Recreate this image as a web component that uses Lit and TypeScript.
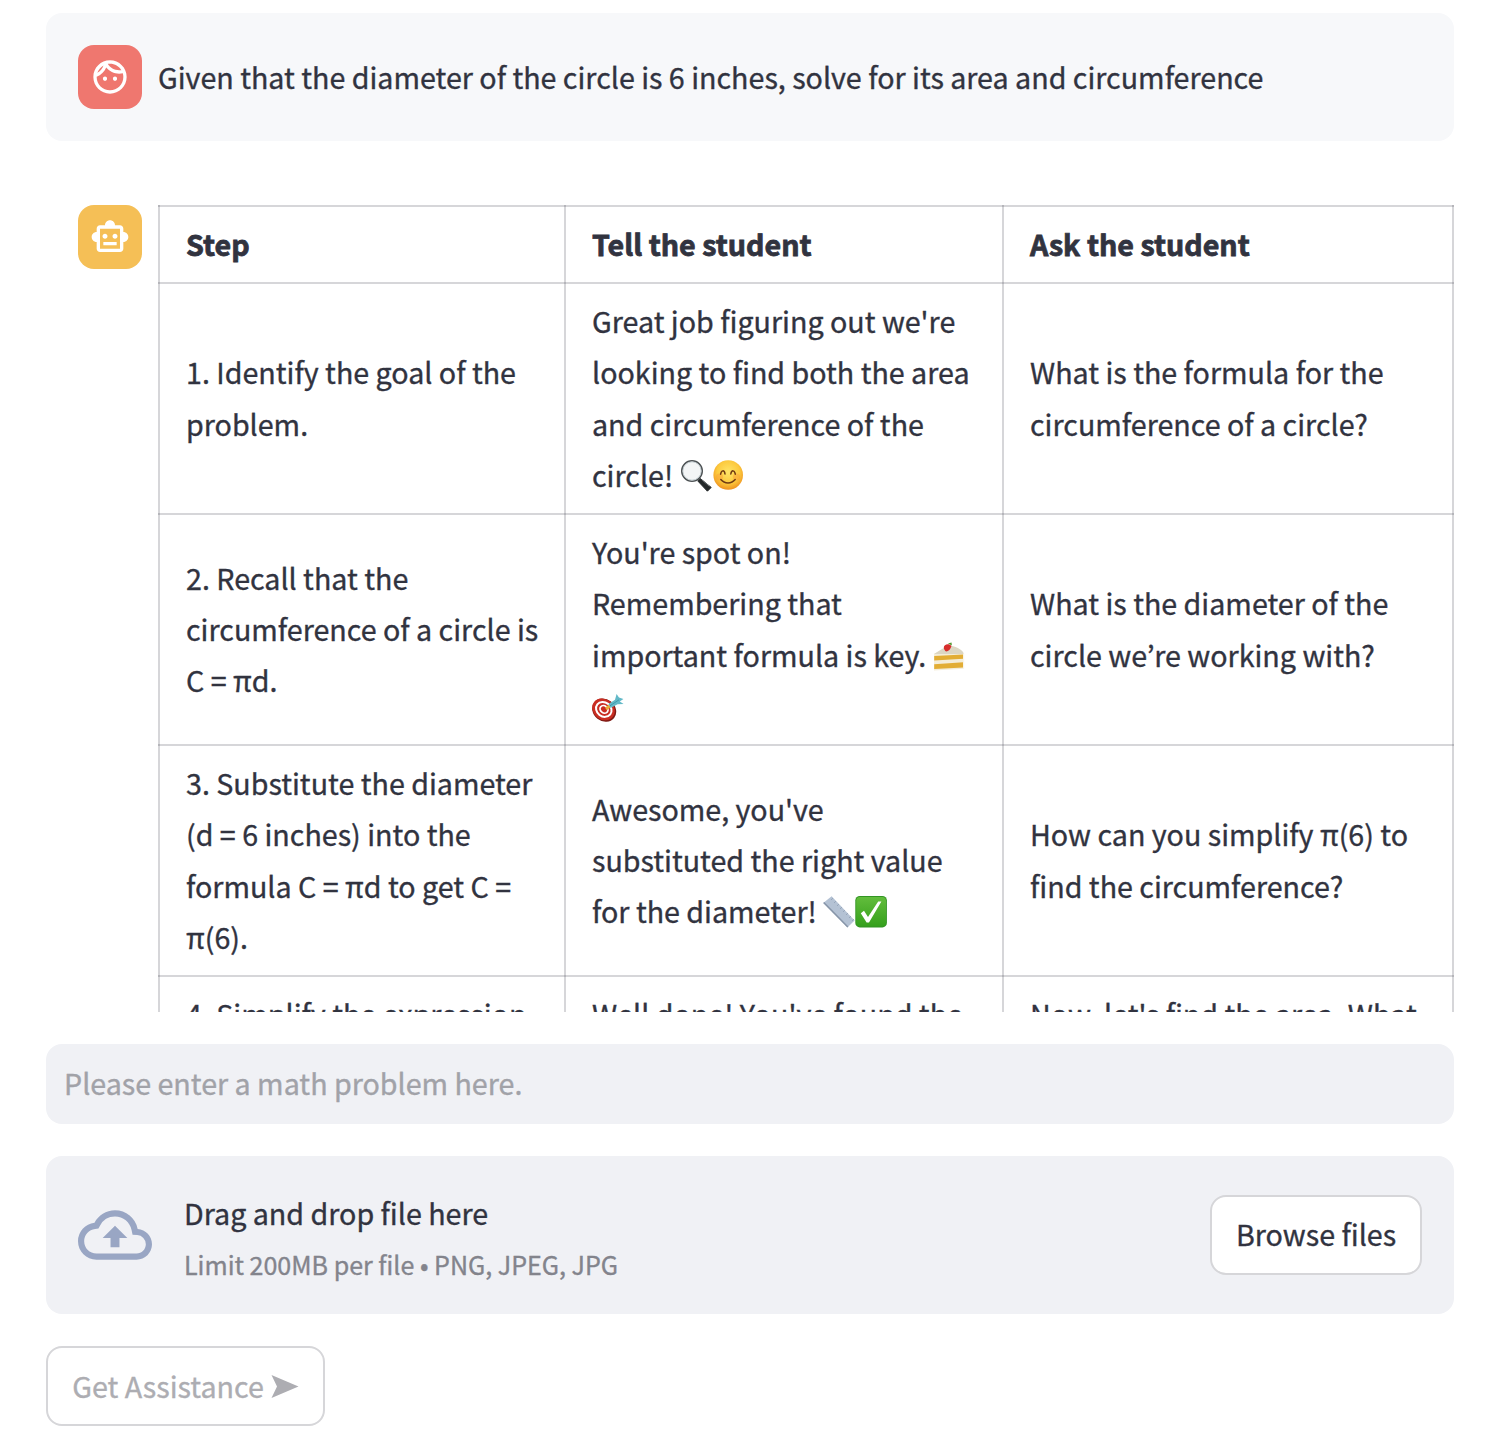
import { LitElement, html, css, svg, TemplateResult } from "lit";
import { customElement } from "lit/decorators.js";

type Line = string | TemplateResult;

const magnifier = html`<svg class="emoji" viewBox="0 0 32 32" role="img" aria-label="magnifying glass">
  <path d="M20 18.5 31.2 27.4 27.4 31.2 17.8 21z" fill="#24282a" stroke="#24282a" stroke-linejoin="round"/>
  <path d="M22 19.8 29.3 26.2" stroke="#6d7275" stroke-width="1"/>
  <circle cx="12" cy="11" r="10.2" fill="#f3f5f6" stroke="#4b5052" stroke-width="1.6"/>
  <circle cx="12" cy="11" r="9.2" fill="none" stroke="#bcc6cb" stroke-width=".9"/>
</svg>`;
const smile = html`<svg class="emoji" viewBox="0 0 32 32" role="img" aria-label="smiling face">
  <defs><radialGradient id="face" cx=".5" cy=".4" r=".62"><stop offset="0" stop-color="#ffe567"/><stop offset=".62" stop-color="#fcc93d"/><stop offset="1" stop-color="#ee8d1c"/></radialGradient></defs>
  <circle cx="16.2" cy="15" r="14.8" fill="url(#face)"/>
  <circle cx="7.5" cy="17" r="3.6" fill="#f99b3a" opacity=".45"/><circle cx="24.5" cy="17" r="3.6" fill="#f99b3a" opacity=".45"/>
  <path d="M8.6 14.2C9.4 9.8 12.4 9.8 13 14M18.8 14C19.5 9.8 22.5 9.8 23.3 14.2M8.8 19.5c3.8 4.5 10.6 4.5 14.4 0" fill="none" stroke="#713b13" stroke-width="1.5" stroke-linecap="round"/>
</svg>`;
const cake = html`<svg class="emoji low" viewBox="0 0 32 32" role="img" aria-label="shortcake">
  <path d="M1 12 15 3.6 31 12v14.8L1 28.6z" fill="#f4edd9"/>
  <path d="M1 12 15 3.6C22 4 29 7 31 12z" fill="#dcd6c3"/>
  <path d="M1.2 14 30.4 12.6v4.2L1.2 18.4zM1.2 22.2 30.4 20.2v5.2L1.2 27z" fill="#e2ad35"/>
  <path d="M30 11.5h1.2v15.2L30 27z" fill="#faf5e8"/>
  <path d="M10.8 5.4c-.2-3.2 5.6-4.8 7.6-1.2-.8 3-3 5-5.2 5.2-1.2-.6-2.2-2-2.4-4z" fill="#d72e2c"/>
  <path d="M15 1.5 18.5.4l.4 3.2z" fill="#51952d"/>
</svg>`;
const target = html`<svg class="emoji low" viewBox="0 0 32 32" role="img" aria-label="bullseye">
  <ellipse cx="12.2" cy="17.2" rx="12.6" ry="11" transform="rotate(38 12.2 17.2)" fill="#7f1a14"/>
  <ellipse cx="11.5" cy="16.4" rx="12" ry="10.2" transform="rotate(38 11.5 16.4)" fill="#c92d22"/>
  <g fill="none"><ellipse cx="11.8" cy="16.4" rx="8.2" ry="7" transform="rotate(38 11.8 16.4)" stroke="#fff" stroke-width="2"/><ellipse cx="12" cy="16.4" rx="4.2" ry="3.5" transform="rotate(38 12 16.4)" stroke="#fff" stroke-width="1.8"/></g>
  <path d="m14 16 4-3.4" stroke="#e8ac38" stroke-width="3"/>
  <path d="M16.5 11 23 6.8 24.6 1l2.4 3.4L31.4 6l-3.6 2.4L31.6 11l-6 .2-7 3.8z" fill="#63b9c8"/>
  <path d="m18 12.8 9-6" stroke="#398fa3" stroke-width=".8"/>
</svg>`;
const ruler = html`<svg class="emoji" viewBox="0 0 32 32" role="img" aria-label="straight ruler">
  <path d="M.2 7 8.6.2 31.6 24.6 24.4 31.6z" fill="#b4c2d4"/>
  <path d="M.2 7 24.4 31.6l1-1L1.3 6.1z" fill="#8795a8"/>
  <path d="m10 2-2 2m5 1-2 2m5 1-2 2m5 1-2 2m5 1-2 2m5 1-2 2m5 1-2 2m5 1-2 2" stroke="#8c9bb0" stroke-width=".7"/>
</svg>`;
const check = html`<svg class="emoji" viewBox="0 0 32 32" role="img" aria-label="check mark">
  <defs><linearGradient id="green" x2="0" y2="1"><stop stop-color="#62bd3c"/><stop offset="1" stop-color="#35a01c"/></linearGradient></defs>
  <rect x=".3" y="0" width="31.6" height="31.4" rx="4.5" fill="#329523"/><rect x="1.2" y=".9" width="29.8" height="29.4" rx="3.8" fill="url(#green)"/>
  <path d="M5.8 17.2 9 14.8l4 6.2L23.2 5.4h3.2L14 26.4h-2.4z" fill="#fff"/>
</svg>`;

const rows: Line[][][] = [
  [
    ["1. Identify the goal of the", "problem."],
    ["Great job figuring out we're", "looking to find both the area", "and circumference of the", html`circle! ${magnifier}${smile}`],
    ["What is the formula for the", "circumference of a circle?"],
  ],
  [
    ["2. Recall that the", "circumference of a circle is", "C = πd."],
    ["You're spot on!", "Remembering that", html`important formula is key. ${cake}`, html`${target}`],
    ["What is the diameter of the", "circle we’re working with?"],
  ],
  [
    ["3. Substitute the diameter", "(d = 6 inches) into the", "formula C = πd to get C =", "π(6)."],
    ["Awesome, you've", "substituted the right value", html`for the diameter! ${ruler}${check}`],
    ["How can you simplify π(6) to", "find the circumference?"],
  ],
  [
    ["4. Simplify the expression"],
    ["Well done! You've found the"],
    ["Now, let's find the area. What"],
  ],
];

@customElement("app-root")
export class AppRoot extends LitElement {
  static styles = css`
    :host {
      display: block;
      box-sizing: border-box;
      height: 1452px;
      padding: 13px 42px 0 46px;
      background: #fff;
      color: #31333f;
      font: 400 28.65px/51.2px "Noto Sans CJK KR", "Noto Sans", sans-serif;
      -webkit-text-stroke: 0.35px currentColor;
      overflow: hidden;
      white-space: nowrap;
    }
    * { box-sizing: border-box; }
    .chat { height: 999px; overflow: hidden; display: flex; flex-direction: column; gap: 32px; }
    .message { display: flex; gap: 16px; flex: none; padding: 32px 0 32px 32px; border-radius: 16px; }
    .user { height: 128px; background: #f7f8fa; }
    .avatar { width: 64px; height: 64px; flex: none; display: grid; place-items: center; border-radius: 16px; }
    .avatar svg { width: 40px; height: 40px; fill: #fff; }
    .red { background: #ef776f; }
    .yellow { background: #f5bf56; }
    .prompt { padding-top: 6px; }
    table { width: 1296px; flex: none; border-collapse: collapse; table-layout: fixed; }
    th, td { border: 2px solid rgba(49, 51, 63, 0.2); padding: 10.95px 0 12.9px 26px; text-align: left; vertical-align: middle; }
    th { font-weight: 700; height: 77px; padding: 10.6px 0 13.2px 26px; -webkit-text-stroke-width: 0.8px; }
    td { height: 231px; }
    .c1 { width: 406px; }
    .c2 { width: 438px; }
    .line { height: 51.2px; }
    .emoji { width: 32px; height: 32px; vertical-align: -5px; }
    .emoji.low { vertical-align: -7px; }
    .panel { width: 1408px; margin-top: 32px; border-radius: 16px; background: #f0f1f5; }
    .input { height: 80px; padding: 13px 18px; color: #a1a2a8; }
    .upload { height: 158px; padding: 0 32px; display: flex; align-items: center; }
    .cloud { width: 74px; height: 74px; fill: #99a6c4; }
    .info { flex: 1; padding: 7px 0 0 32px; }
    .limit { font-size: 25.04px; color: #83848c; }
    button { font: inherit; height: 80px; border: 2px solid #d6d6d9; border-radius: 16px; background: #fff; color: inherit; padding: 0; line-height: 76px; -webkit-text-stroke: inherit; }
    .browse { width: 212px; padding-bottom: 2px; line-height: 74px; }
    .assist { display: flex; align-items: center; justify-content: center; gap: 7px; width: 279px; margin-top: 32px; color: #adadb2; }
    .arrow { width: 28px; height: 23px; fill: #adadb2; }
    svg { -webkit-text-stroke: 0; }
  `;

  private cell(lines: Line[]) {
    return html`<td>${lines.map((l) => html`<div class="line">${l}</div>`)}</td>`;
  }

  render() {
    return html`
      <div class="chat">
        <div class="message user">
          <div class="avatar red">
            <svg viewBox="0 0 24 24">${svg`<path d="M10.25 13c0 .69-.56 1.25-1.25 1.25S7.75 13.69 7.75 13s.56-1.25 1.25-1.25 1.25.56 1.25 1.25zM15 11.75c-.69 0-1.25.56-1.25 1.25s.56 1.25 1.25 1.25 1.25-.56 1.25-1.25-.56-1.25-1.25-1.25zm7 .25c0 5.52-4.48 10-10 10S2 17.52 2 12 6.48 2 12 2s10 4.48 10 10zM10.66 4.12C12.06 6.44 14.6 8 17.5 8c.46 0 .91-.05 1.34-.12C17.44 5.56 14.9 4 12 4c-.46 0-.91.05-1.34.12zM4.42 9.47c1.71-.97 3.03-2.55 3.66-4.44C6.37 6 5.05 7.58 4.42 9.47zM20 12c0-.78-.12-1.53-.33-2.24-.7.15-1.42.24-2.17.24-3.13 0-5.92-1.44-7.76-3.69C8.69 8.87 6.6 10.88 4 11.86c.01.04 0 .09 0 .14 0 4.42 3.58 8 8 8s8-3.58 8-8z"/>`}</svg>
          </div>
          <div class="prompt">Given that the diameter of the circle is 6 inches, solve for its area and circumference</div>
        </div>
        <div class="message">
          <div class="avatar yellow">
            <svg viewBox="0 0 24 24">${svg`<path d="M20 9V7c0-1.1-.9-2-2-2h-3c0-1.66-1.34-3-3-3S9 3.34 9 5H6c-1.1 0-2 .9-2 2v2c-1.66 0-3 1.34-3 3s1.34 3 3 3v4c0 1.1.9 2 2 2h12c1.1 0 2-.9 2-2v-4c1.66 0 3-1.34 3-3s-1.34-3-3-3zm-2 10H6V7h12v12zm-9-6c-.83 0-1.5-.67-1.5-1.5S8.17 10 9 10s1.5.67 1.5 1.5S9.83 13 9 13zm7.5-1.5c0 .83-.67 1.5-1.5 1.5s-1.5-.67-1.5-1.5.67-1.5 1.5-1.5 1.5.67 1.5 1.5zM8 15h8v2H8v-2z"/>`}</svg>
          </div>
          <table>
            <colgroup><col class="c1" /><col class="c2" /><col /></colgroup>
            <thead><tr><th>Step</th><th>Tell the student</th><th>Ask the student</th></tr></thead>
            <tbody>${rows.map((r) => html`<tr>${r.map((c) => this.cell(c.length === 1 ? [...c, "", "", ""] : c))}</tr>`)}</tbody>
          </table>
        </div>
      </div>
      <div class="panel input">Please enter a math problem here.</div>
      <div class="panel upload">
        <svg class="cloud" viewBox="0 0 24 24"><path d="M19.35 10.04A7.49 7.49 0 0012 4C9.11 4 6.6 5.64 5.35 8.04A5.994 5.994 0 000 14c0 3.31 2.69 6 6 6h13c2.76 0 5-2.24 5-5 0-2.64-2.05-4.78-4.65-4.96zM19 18H6c-2.21 0-4-1.79-4-4 0-2.05 1.53-3.76 3.56-3.97l1.07-.11.5-.95A5.469 5.469 0 0112 6c2.62 0 4.88 1.86 5.39 4.43l.3 1.5 1.53.11A2.98 2.98 0 0122 15c0 1.65-1.35 3-3 3zM8 13h2.55v3h2.9v-3H16l-4-4-4 4z"/></svg>
        <div class="info">
          <div>Drag and drop file here</div>
          <div class="limit">Limit 200MB per file • PNG, JPEG, JPG</div>
        </div>
        <button class="browse">Browse files</button>
      </div>
      <button class="assist">Get Assistance<svg class="arrow" viewBox="0 0 27 23"><path d="M0 0 27 11.5 0 23 5.5 11.5z"/></svg></button>
    `;
  }
}
